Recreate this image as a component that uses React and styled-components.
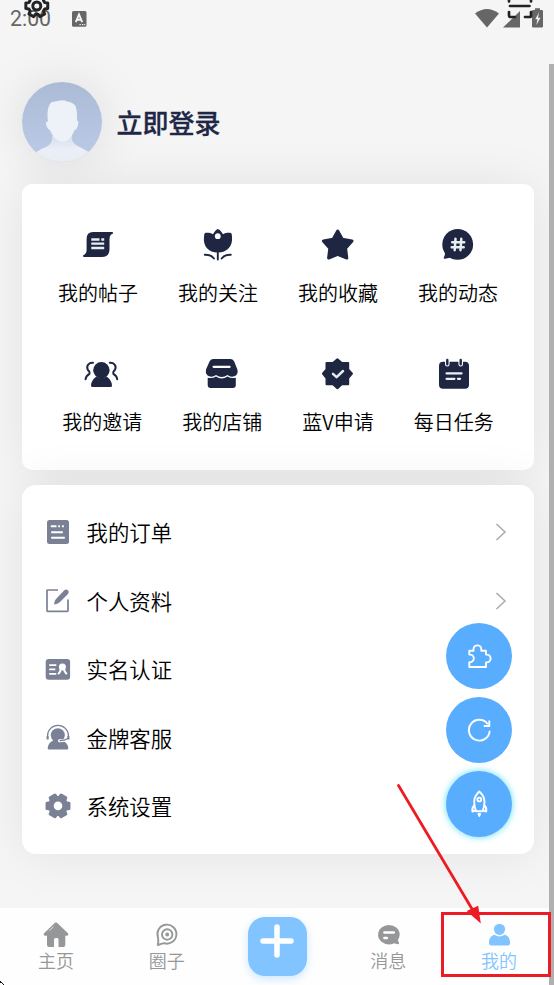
import React from 'react'
import styled, { createGlobalStyle, css } from 'styled-components'

const NAVY = '#1e2642'
const SLATE = '#7b8195'

// outline of a six-toothed gear around (cx, cy)
const gearPath = (cx, cy, outer, inner) => {
  const points = []
  for (let i = 0; i < 6; i++) {
    const steps = [[-22, inner], [-14, outer], [14, outer], [22, inner]]
    steps.forEach(([deg, r]) => {
      const a = ((i * 60 + deg) * Math.PI) / 180
      points.push(`${(cx + r * Math.cos(a)).toFixed(2)} ${(cy + r * Math.sin(a)).toFixed(2)}`)
    })
  }
  return `M${points.join('L')}Z`
}

const PostIcon = () => (
  <GridSvg viewBox="0 0 36 36">
    <path d="M13 5H32q1.6.2 1 1.6Q29.5 8 29.5 12V22Q29.5 30 22 30H4q-1.6-.2-1-1.6Q6.6 27 6.6 23V12Q6.6 5 13 5Z" />
    <path d="M11.3 12.5h8.2M21.3 12.5h2.9M11.3 16.7h12.9M11.3 21h12.9" stroke="#e9edf2" strokeWidth="2.3" />
  </GridSvg>
)

const TulipIcon = () => (
  <GridSvg viewBox="0 0 36 36">
    <path d="M17.8 2C20 2.3 21.4 5 23 7.2 25.5 5.7 29 5.4 31 6q1 .6 1 4C33 19 27 25.6 17.8 25.6S2.8 19 4 10q0-3.4 1-4C7 5.4 10.5 5.7 13 7.2 14.5 5 15.8 2.3 17.8 2Z" />
    <circle cx="17.8" cy="9.2" r="2.9" fill="#fff" />
    <path d="M17.8 25V32.6M4.8 27.7Q11 27.5 14 31.5M30.8 27.7Q24.6 27.5 21.6 31.5" fill="none" stroke={NAVY} strokeWidth="1.9" strokeLinecap="round" />
  </GridSvg>
)

const StarIcon = () => (
  <GridSvg viewBox="0 0 36 36">
    <path d="M17.7 4L22.3 12.3 32 14 25.6 21.2 26.8 31 17.7 27.3 8.6 31 9.8 21.2 3.4 14 13.1 12.3Z" stroke={NAVY} strokeWidth="3" strokeLinejoin="round" />
  </GridSvg>
)

const HashIcon = () => (
  <GridSvg viewBox="0 0 36 36">
    <circle cx="17.7" cy="17.4" r="15.4" />
    <path d="M4.5 23Q5.8 27 3.8 30.5q-.4 1.5 1.2 1.2Q9 31 12 30Z" />
    <path d="M15.5 11.8L14.7 23.2M21.3 11.8L20.5 23.2M12.2 15.2H24.2M11.7 20.2H23.7" stroke="#e6efef" strokeWidth="2.5" strokeLinecap="round" />
  </GridSvg>
)

const InviteIcon = () => (
  <GridSvg viewBox="0 0 36 36">
    <circle cx="17.4" cy="14.2" r="8.2" />
    <path d="M12.5 20.5Q17.4 23.5 22.5 20.5 27.5 23.5 28 29.5q0 1.500-1.500 1.500H8.500Q7 31 7 29.500 7.500 23.500 12.500 20.500Z" />
    <path d="M9 6.800C5 6.500 2 9.500 3.700 13.500 4.500 15 6.500 16 5.500 17.800 3.500 19 1.800 20 1.600 23.300M25.800 6.800C29.800 6.500 32.800 9.500 31.100 13.500 30.300 15 28.300 16 29.300 17.800 31.300 19 33 20 33.200 23.300" fill="none" stroke={NAVY} strokeWidth="2" strokeLinecap="round" />
  </GridSvg>
)

const ShopIcon = () => (
  <GridSvg viewBox="0 0 36 36">
    <path d="M9 3H26.800Q29.300 3 30.200 5.500L33.400 13.500Q34.500 18.500 30.500 20.200 26.500 21.500 23.500 19 17.700 23 12 19 8.500 21.500 5 20.200 1 18.500 2 13.500L5.500 5.500Q6.400 3 9 3Z" />
    <path d="M3.700 21.700Q8.500 22.700 12 20.500 17.700 24.500 23.500 20.500 27 22.700 31.800 21.700V29Q31.800 32 28.800 32H6.700Q3.700 32 3.700 29Z" />
    <path d="M9.600 10.800H25.600" stroke="#fff" strokeWidth="2.200" strokeLinecap="round" />
  </GridSvg>
)

const BadgeIcon = () => (
  <GridSvg viewBox="0 0 36 36">
    <path d="M17.400 3.300L21.800 7H28.200V13.300L32 17.700 28.200 22V28.300H21.800L17.400 32.300 13 28.300H6.500V22L2.900 17.700 6.500 13.300V7H13Z" stroke={NAVY} strokeWidth="2" strokeLinejoin="round" />
    <path d="M13 17.800L16.600 21.100 23 15" fill="none" stroke="#e6edf2" strokeWidth="2.500" strokeLinecap="round" strokeLinejoin="round" />
  </GridSvg>
)

const TaskIcon = () => (
  <GridSvg viewBox="0 0 36 36">
    <rect x="3" y="5.700" width="30" height="27" rx="4" />
    <path d="M11.300 4V8.300M24.700 4V8.300" stroke="#fff" strokeWidth="4.600" strokeLinecap="round" />
    <path d="M11.300 4V8.300M24.700 4V8.300" stroke={NAVY} strokeWidth="2.400" strokeLinecap="round" />
    <path d="M10.600 17.400H25.500M10.600 22.800H18.400M22 22.800H24" stroke="#edf1f5" strokeWidth="2.300" strokeLinecap="round" />
  </GridSvg>
)

const OrderIcon = () => (
  <MenuSvg viewBox="0 0 28 28">
    <rect x="3" y="1" width="22" height="24" rx="2.500" />
    <path d="M6.800 7.200H12.500M14.200 7.200h1.800M18 7.200h1.800M7.200 13.300H18.800M7.200 18.800H20.800" stroke="#fff" strokeWidth="1.900" />
  </MenuSvg>
)

const EditIcon = () => (
  <MenuSvg viewBox="0 0 28 28">
    <path d="M14 3H3.500Q3 3 3 3.500V23.800Q3 24.300 3.500 24.300H23.500Q24 24.300 24 23.800V12.500" fill="none" stroke={SLATE} strokeWidth="1.700" />
    <path d="M10 17.500Q10 14 12 12L20.300 3.300Q22 1.800 24 3.300 25.500 5.200 24 6.900L16 15Q13.500 17.400 10 17.500Z" />
  </MenuSvg>
)

const IdIcon = () => (
  <MenuSvg viewBox="0 0 28 28">
    <rect x="1.700" y="3" width="24.400" height="20.800" rx="3" />
    <path d="M5.200 9.200H12.300M5.200 13.400H11.300M5.200 17.800H12.300" stroke="#fff" strokeWidth="1.800" />
    <circle cx="18.400" cy="11" r="3.500" fill="#fff" />
    <path d="M16.800 13Q16.500 15.800 14.700 17.500M20 13Q20.300 15.800 22.300 17.500" fill="none" stroke="#fff" strokeWidth="2.100" strokeLinecap="round" />
  </MenuSvg>
)

const ServiceIcon = () => (
  <MenuSvg viewBox="0 0 28 28">
    <circle cx="13.800" cy="11.200" r="7" />
    <path d="M9.500 16.500H18Q24 18.500 24.300 24.500 24.300 25.600 23 25.600H5Q3.700 25.600 3.700 24.500 4 18.500 9.500 16.500Z" />
    <path d="M3.600 15V11.500A10.300 10 0 0 1 24.400 11.500V15" fill="none" stroke={SLATE} strokeWidth="1.300" />
    <path d="M3.600 12V15.500M24.400 12V15.500" stroke={SLATE} strokeWidth="2" />
    <path d="M15.500 16.800Q19 16.900 21 16" fill="none" stroke="#fff" strokeWidth="3" strokeLinecap="round" />
    <path d="M16 16.600Q20.500 16.700 23.800 14.500" fill="none" stroke={SLATE} strokeWidth="1.300" strokeLinecap="round" />
  </MenuSvg>
)

const SettingIcon = () => (
  <MenuSvg viewBox="0 0 28 28">
    <path d={gearPath(14, 12.9, 11.3, 8.6)} stroke={SLATE} strokeWidth="3" strokeLinejoin="round" />
    <circle cx="14" cy="12.900" r="4.300" fill="#fff" />
  </MenuSvg>
)

const PuzzleIcon = () => (
  <FabSvg viewBox="0 0 32 32">
    <path d="M6.300 10.700H10.500V9.300a3.900 3.900 0 0 1 7.800 0V10.700H23V14.600H23.700a3.900 3.900 0 0 1 0 7.800H23V27H6.300V22.200H7a3.800 3.800 0 0 0 0-7.600H6.300Z" />
  </FabSvg>
)

const RefreshIcon = () => (
  <FabSvg viewBox="0 0 32 32">
    <path d="M26.700 16.700A10.400 10.400 0 1 1 24.800 10.200M26.300 6.500V12H20.800" />
  </FabSvg>
)

const RocketIcon = () => (
  <FabSvg viewBox="0 0 32 32">
    <path d="M16.300 3.500Q21.500 8 21.500 14 21.500 19 19.500 23.200H13.200Q11.200 19 11.200 14 11.200 8 16.300 3.500Z" />
    <circle cx="16.300" cy="11.500" r="1.900" />
    <path d="M11.400 17.300Q8.800 19.500 9.400 23.500L12.700 22.500M21.300 17.300Q23.800 19.500 23.300 23.500L20 22.500" />
    <path d="M15.500 26H17.100L16.300 28Z" fill="#fff" />
  </FabSvg>
)

const HomeIcon = () => (
  <NavSvg viewBox="0 0 28 28">
    <path d="M13 1.700Q14 .8 15 1.700L26.200 12.500Q27 14.500 25 14.800H23.300V24Q23.300 26 21.300 26H16.500V18.500Q16.500 17 15.300 17H13.500Q12 17 12 18.500V26H7Q5 26 5 24V14.800H3Q1 14.500 1.800 12.500Z" />
    <path d="M7.700 9.500L11.300 5.900" stroke="#e8e8e8" strokeWidth=".9" strokeLinecap="round" />
  </NavSvg>
)

const CircleIcon = () => (
  <NavSvg viewBox="0 0 28 28" $line>
    <path d="M4.800 24Q5.800 20 5 16.500A9.500 9.500 0 1 1 11 22.200Q8.500 22.800 4.800 24Z" />
    <circle cx="14.200" cy="13.500" r="5.200" />
    <circle cx="14.200" cy="13.500" r="1" />
  </NavSvg>
)

const MessageIcon = () => (
  <NavSvg viewBox="0 0 28 28">
    <ellipse cx="14.900" cy="13.700" rx="10.800" ry="9.700" />
    <path d="M24 17Q23.800 20 25 22q.3 1.200-1 1.200L19 22Z" />
    <path d="M10.400 11.500H19.800M10.400 16.900H12.800" stroke="#fff" strokeWidth="2.500" strokeLinecap="round" />
  </NavSvg>
)

const MineIcon = () => (
  <NavSvg viewBox="0 0 28 28">
    <circle cx="14.500" cy="8.300" r="5.600" />
    <path d="M9.500 13.800Q14.500 17 19.500 13.800 25.300 15.500 25.200 22 25.200 24.500 22.500 24.500H6.500Q4 24.500 4 22 3.800 15.500 9.500 13.800Z" />
  </NavSvg>
)

const Avatar = () => (
  <AvatarBox>
    <svg width="80" height="80" viewBox="0 0 80 80">
      <defs>
        <linearGradient id="sky" x1="0" y1="0" x2="0" y2="1">
          <stop offset="0" stopColor="#abbbd6" />
          <stop offset="1" stopColor="#bccbe7" />
        </linearGradient>
        <linearGradient id="neck" x1="0" y1="0" x2="0" y2="1">
          <stop offset="0" stopColor="#d5deed" />
          <stop offset=".5" stopColor="#ebeff8" />
        </linearGradient>
      </defs>
      <rect width="80" height="80" fill="url(#sky)" />
      <path d="M30 54Q31 60 26 64 18 67 13 71V80H68V71Q60 66 54 63 49 60 50 54Z" fill="url(#neck)" />
      <path d="M26 40Q24 24 30 20 35 19 38 18.500 42 17.500 45 19.500 51 20 53.500 24 55.500 29 55 39 57 38 56 43 55 48 52.500 48 50 55 46 58 41 61.500 35 58 30 54 28 48 25 47 24 42 24 38 26 40Z" fill="#edf1f8" />
    </svg>
  </AvatarBox>
)

const StatusIcons = () => (
  <svg width="70" height="22" viewBox="474 8 70 22" fill="#666">
    <path d="M475 13.500Q487 4.500 499 13.500L487 27.500Z" />
    <path d="M520 11V27.500H503Z" />
    <path d="M535 8.300H540V10H542Q543 10 543 11V26.500Q543 27.500 542 27.500H533Q532 27.500 532 26.500V11Q532 10 533 10H535Z" />
    <path d="M539 12.500L535.300 19.300H537.500L536.300 25 540.500 17.700H538Z" fill="#f5f5f5" />
  </svg>
)

const shortcutRows = [
  [
    { label: '我的帖子', Icon: PostIcon },
    { label: '我的关注', Icon: TulipIcon },
    { label: '我的收藏', Icon: StarIcon },
    { label: '我的动态', Icon: HashIcon },
  ],
  [
    { label: '我的邀请', Icon: InviteIcon },
    { label: '我的店铺', Icon: ShopIcon },
    { label: '蓝V申请', Icon: BadgeIcon },
    { label: '每日任务', Icon: TaskIcon },
  ],
]

const menu = [
  { label: '我的订单', Icon: OrderIcon, arrow: true },
  { label: '个人资料', Icon: EditIcon, arrow: true },
  { label: '实名认证', Icon: IdIcon },
  { label: '金牌客服', Icon: ServiceIcon },
  { label: '系统设置', Icon: SettingIcon },
]

const App = () => {
  return (
    <Page>
      <GlobalStyle />
      <StatusBar>
        <Clock>2:00</Clock>
        <svg width="15" height="16" viewBox="0 0 15 16">
          <rect width="14.500" height="15.700" rx="1.500" fill="#666" />
          <path d="M3.800 11.200L7 3.500 10.200 11.200M5 8.700H9" fill="none" stroke="#f5f5f5" strokeWidth="1.900" />
          <path d="M7.500 13.700h1.300M10 13.700h1.300M12.300 13.700h1" stroke="#f5f5f5" strokeWidth="1.200" />
        </svg>
        <Spacer />
        <StatusIcons />
      </StatusBar>

      <TopActions viewBox="0 0 554 24">
        <path d={gearPath(36.8, 5.8, 11.3, 8.5)} />
        <circle cx="36.800" cy="6" r="4" />
        <path d="M510 6H529.500M509 -2V1.500M531 -2V1.500M509 12V15.500Q509 17 510.500 17H515M531 12V15.500Q531 17 529.500 17H525" strokeWidth="2.700" strokeLinecap="round" />
      </TopActions>

      <Profile>
        <Avatar />
        <h1>立即登录</h1>
      </Profile>

      <ShortcutCard>
        {shortcutRows.map((row, i) => (
          <ShortcutRow key={i}>
            {row.map(({ label, Icon }) => (
              <Shortcut key={label}>
                <Icon />
                <span>{label}</span>
              </Shortcut>
            ))}
          </ShortcutRow>
        ))}
      </ShortcutCard>

      <MenuCard>
        {menu.map(({ label, Icon, arrow }) => (
          <MenuItem key={label}>
            <Icon />
            <span>{label}</span>
            {arrow && (
              <Arrow viewBox="0 0 12 18">
                <path d="M1.500 1L10 9 1.500 17" />
              </Arrow>
            )}
          </MenuItem>
        ))}
      </MenuCard>

      <FabList>
        <Fab><PuzzleIcon /></Fab>
        <Fab><RefreshIcon /></Fab>
        <Fab $glow><RocketIcon /></Fab>
      </FabList>

      <TabBar>
        <Tab><HomeIcon /><span>主页</span></Tab>
        <Tab><CircleIcon /><span>圈子</span></Tab>
        <Tab>
          <AddButton>
            <svg width="36" height="36" viewBox="0 0 36 36">
              <path d="M18 4V32M4 18H32" stroke="#fff" strokeWidth="5.500" strokeLinecap="round" />
            </svg>
          </AddButton>
        </Tab>
        <Tab><MessageIcon /><span>消息</span></Tab>
        <Tab $active><MineIcon /><span>我的</span></Tab>
      </TabBar>

      <ScrollThumb />

      <Callout viewBox="0 0 554 985">
        <path d="M398.500 785.500L475 914" stroke="#ed1c24" strokeWidth="2.800" strokeLinecap="round" />
        <path d="M480.800 923.500L466.700 911 478.200 905.700Z" fill="#ed1c24" />
        <rect x="442.500" y="913.500" width="107" height="62" fill="none" stroke="#ed1c24" strokeWidth="3" />
        <path d="M0 981h1v1h1v1h-2zM2 983h1v1h-1zM3 984h1v1h-1z" fill="#111" />
      </Callout>
    </Page>
  )
}

const GlobalStyle = createGlobalStyle`
  * {
    box-sizing: border-box;
  }

  body {
    margin: 0;
    background: #f5f5f5;
    font-family: "Noto Sans CJK SC", sans-serif;
    font-weight: 350;
    overflow: hidden;
  }
`

const Page = styled.div`
  position: relative;
  width: 554px;
  height: 985px;
  display: flex;
  flex-direction: column;
  background: #f5f5f5;
  overflow: hidden;
`

const StatusBar = styled.div`
  height: 37px;
  flex-shrink: 0;
  display: flex;
  align-items: center;
  padding: 0 10px;
`

const Clock = styled.span`
  width: 62px;
  font-family: Roboto, sans-serif;
  font-size: 21.300px;
  font-weight: 400;
  color: #666;
`

const Spacer = styled.div`
  flex: 1;
`

const TopActions = styled.svg`
  position: absolute;
  top: 0;
  left: 0;
  width: 554px;
  height: 24px;
  fill: none;
  stroke: #222325;
  stroke-width: 3;
  stroke-linejoin: round;
`

const Profile = styled.div`
  height: 80px;
  margin: 45px 0 22px;
  padding-left: 21.500px;
  flex-shrink: 0;
  display: flex;
  align-items: center;

  h1 {
    margin: 0 0 0 15px;
    font-size: 26px;
    font-weight: 500;
    line-height: 38px;
    color: #1f2747;
    -webkit-text-stroke: 0.3px #1f2747;
  }
`

const AvatarBox = styled.div`
  width: 80px;
  height: 80px;
  border-radius: 50%;
  overflow: hidden;
  box-shadow: 0 0 50px rgba(0, 0, 0, 0.1);

  svg {
    display: block;
  }
`

const card = css`
  width: 512px;
  margin-left: 22px;
  flex-shrink: 0;
  display: flex;
  flex-direction: column;
  background: #fff;
  box-shadow: 0 0 50px rgba(0, 0, 0, 0.08);
`

const ShortcutCard = styled.section`
  ${card}
  height: 286px;
  padding-top: 43px;
  gap: 48px;
  border-radius: 10px;
`

const ShortcutRow = styled.div`
  display: flex;
  justify-content: center;
  gap: 40px;
`

const Shortcut = styled.div`
  display: flex;
  flex-direction: column;
  align-items: center;
  gap: 15px;
  font-size: 20px;
  line-height: 30px;
  color: #000;
`

const GridSvg = styled.svg`
  width: 36px;
  height: 36px;
  fill: ${NAVY};
`

const MenuCard = styled.section`
  ${card}
  height: 369.500px;
  margin-top: 14.500px;
  padding: 14px 27px 0 22px;
  border-radius: 14px;
`

const MenuItem = styled.div`
  height: 68.500px;
  display: flex;
  align-items: center;
  font-size: 21.400px;
  color: #000;

  span {
    flex: 1;
    margin-left: 14.500px;
    padding-bottom: 2px;
  }
`

const MenuSvg = styled.svg`
  width: 28px;
  height: 28px;
  fill: ${SLATE};
`

const Arrow = styled.svg`
  width: 12px;
  height: 18px;
  margin-bottom: 1px;
  fill: none;
  stroke: #aaa;
  stroke-width: 1.500;
`

const FabList = styled.div`
  position: absolute;
  top: 623px;
  left: 446px;
  display: flex;
  flex-direction: column;
  gap: 7.700px;
`

const Fab = styled.div`
  width: 66.300px;
  height: 66.300px;
  display: flex;
  align-items: center;
  justify-content: center;
  border-radius: 50%;
  background: #58adff;
  box-shadow: ${({ $glow }) => ($glow ? '0 0 7px #5fdcf5' : 'none')};
`

const FabSvg = styled.svg`
  width: 32px;
  height: 32px;
  fill: none;
  stroke: #fff;
  stroke-width: 1.900;
  stroke-linejoin: round;
`

const TabBar = styled.nav`
  height: 77px;
  margin-top: auto;
  flex-shrink: 0;
  display: flex;
  background: #fefefe;
  z-index: 1;
`

const Tab = styled.div`
  flex: 1;
  display: flex;
  flex-direction: column;
  align-items: center;
  padding: 12.500px 0 0 1px;
  font-size: 18px;
  line-height: 23px;
  color: ${({ $active }) => ($active ? '#82c4ff' : '#969799')};
`

const NavSvg = styled.svg`
  width: 28px;
  height: 28px;
  fill: ${({ $line }) => ($line ? 'none' : 'currentColor')};
  stroke: ${({ $line }) => ($line ? 'currentColor' : 'none')};
  stroke-width: 1.900;
  stroke-linejoin: round;
`

const AddButton = styled.div`
  width: 59px;
  height: 59px;
  margin-top: -3.500px;
  padding-top: 6px;
  display: flex;
  justify-content: center;
  border-radius: 17px;
  background: #82c4ff;
  box-shadow: 0 3px 8px rgba(130, 196, 255, 0.4);
`

const ScrollThumb = styled.div`
  position: absolute;
  top: 64px;
  right: 0;
  bottom: 0;
  width: 5.500px;
  background: #b0b0b0;
  z-index: 1;
`

const Callout = styled.svg`
  position: absolute;
  top: 0;
  left: 0;
  width: 554px;
  height: 985px;
  pointer-events: none;
  z-index: 2;
`

export default App
